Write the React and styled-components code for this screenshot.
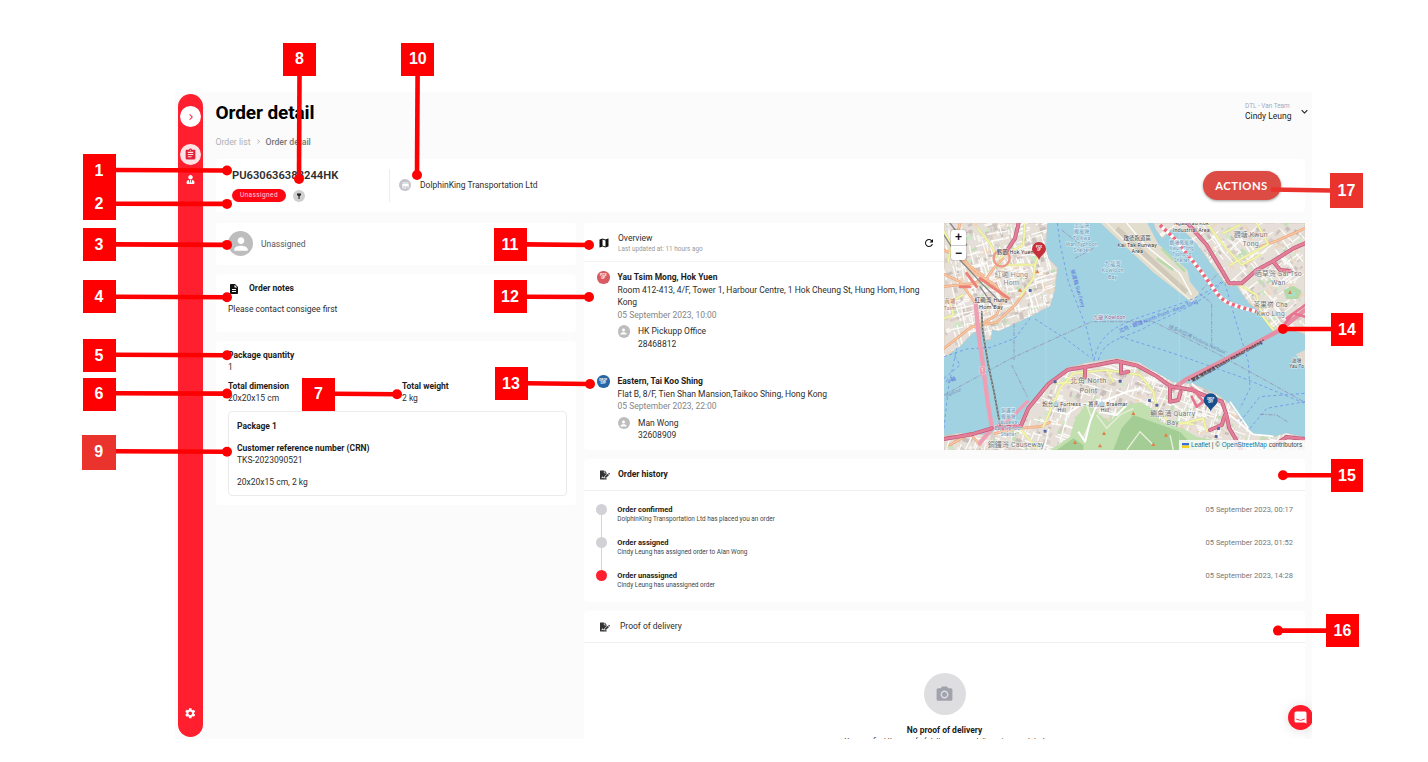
import React from "react";
import styled, { createGlobalStyle } from "styled-components";
import {
  MdChevronRight, MdAssignment, MdSettings, MdPerson, MdMap, MdRefresh,
  MdDescription, MdCameraAlt, MdStore, MdKeyboardArrowDown,
} from "react-icons/md";
import { FaFileSignature, FaUserTie } from "react-icons/fa";

const Global = createGlobalStyle`
  * { box-sizing: border-box; }
  body { margin: 0; background: #fff; font-family: Roboto, "Liberation Sans", sans-serif; }
  svg { display: block; flex: none; }
`;

const Page = styled.div`
  position: relative;
  width: 1428px;
  height: 762px;
  padding: 92px 116px 23px 175px;
  overflow: hidden;
`;
const Frame = styled.div`
  position: relative;
  display: flex;
  gap: 13px;
  height: 647px;
  padding: 1.5px 7.5px 0 3px;
  background: #fbfbfb;
  overflow: hidden;
`;
const Sidebar = styled.nav`
  width: 25px;
  height: 643.5px;
  flex: none;
  border-radius: 13px;
  background: #ff1f2f;
  color: #fff;
  display: flex;
  flex-direction: column;
  align-items: center;
  padding: 12.5px 0 17px;
`;
const NavItem = styled.div`
  width: 21px;
  height: 21px;
  border-radius: 50%;
  display: flex;
  align-items: center;
  justify-content: center;
  margin-bottom: ${(p) => p.$after || 0}px;
  background: ${(p) => p.$bg || "transparent"};
  color: ${(p) => p.$fg || "#fff"};
`;
const Spacer = styled.div`flex: 1;`;
const Main = styled.main`
  flex: 1;
  min-width: 0;
  display: flex;
  flex-direction: column;
  & > * { flex-shrink: 0; }
`;
const Text = styled.div`
  font-size: ${(p) => p.$size || 8.5}px;
  font-weight: ${(p) => p.$weight || 400};
  line-height: ${(p) => p.$lh || 12.5}px;
  letter-spacing: ${(p) => p.$ls || 0}px;
  color: ${(p) => p.$color || "#2e2e2e"};
  white-space: nowrap;
`;
const Bold = styled(Text)`
  font-weight: 700;
  color: #1c1c1c;
  text-align: ${(p) => p.$align || "left"};
`;
const TopBar = styled.header`
  display: flex;
  justify-content: space-between;
  height: 65px;
`;
const Title = styled.h1`
  margin: 7px 0 0 -0.5px;
  font-size: 19px;
  line-height: 24px;
  letter-spacing: -0.1px;
  color: #000;
`;
const Crumbs = styled.div`
  display: flex;
  align-items: center;
  gap: 3px;
  margin: 11px 0 0 -0.5px;
  color: #b5b5b5;
`;
const User = styled.div`
  display: flex;
  align-items: center;
  gap: 6px;
  height: 22px;
  margin: 7px -6px 0 0;
`;
const Card = styled.section`
  background: #fff;
  border-radius: 4px;
`;
const Summary = styled(Card)`
  display: flex;
  align-items: center;
  height: 53.5px;
  padding: 0 24px 0 16px;
`;
const OrderRef = styled.div`width: 157px;`;
const StatusRow = styled.div`
  display: flex;
  align-items: center;
  gap: 7px;
  margin-top: 6px;
`;
const Badge = styled.div`
  width: 54px;
  height: 13px;
  border-radius: 7px;
  background: #ff0712;
  color: #ffd5d8;
  font-size: 6.5px;
  letter-spacing: 0.4px;
  line-height: 13px;
  text-align: center;
`;
const Round = styled.div`
  width: ${(p) => p.$d}px;
  height: ${(p) => p.$d}px;
  flex: none;
  border-radius: 50%;
  background: ${(p) => p.$bg};
  color: ${(p) => p.$fg || "#fff"};
  display: flex;
  align-items: center;
  justify-content: center;
`;
const Divider = styled.div`
  width: 1px;
  height: 33px;
  background: #ececec;
  margin-right: 9px;
`;
const Company = styled.div`
  display: flex;
  align-items: center;
  gap: 9px;
  flex: 1;
`;
const ActionButton = styled.button`
  width: 78px;
  height: 29.5px;
  padding: 0;
  border: 0;
  border-radius: 15px;
  background: #dc4b44;
  color: #fff;
  font: 700 11.3px/29px Lato, sans-serif;
  letter-spacing: 0.45px;
  box-shadow: 0 1px 3px rgba(0, 0, 0, 0.4);
`;
const Columns = styled.div`
  display: grid;
  grid-template-columns: 360px 721px;
  gap: 8px;
  margin-top: 11px;
`;
const Column = styled.div`
  display: flex;
  flex-direction: column;
  gap: 9px;
`;
const Assignee = styled(Card)`
  display: flex;
  align-items: center;
  gap: 8px;
  height: 41.5px;
  padding: 0 12px;
`;
const Notes = styled(Card)`
  height: 58.5px;
  padding: 9px 12px;
`;
const NotesHead = styled.div`
  display: flex;
  align-items: center;
  gap: 9px;
  height: 12px;
  margin-bottom: 8.5px;
`;
const Packages = styled(Card)`
  height: 164px;
  padding: 7.8px 9px 8.5px 12px;
`;
const Totals = styled.div`
  display: grid;
  grid-template-columns: 174px 1fr;
  margin: 6px 0 6.7px;
`;
const PackageBox = styled.div`
  height: 85px;
  border: 1px solid #ebebeb;
  border-radius: 4px;
  padding: 8px;
  display: flex;
  flex-direction: column;
  gap: 9px;
`;
const Overview = styled(Card)`
  display: grid;
  grid-template-columns: 360px 361px;
  height: 227px;
`;
const OverviewHead = styled.div`
  display: flex;
  align-items: center;
  height: 39px;
  padding: 1px 9px 0 14px;
  border-bottom: 1.5px solid #f3f3f3;
`;
const HeadText = styled.div`
  flex: 1;
  margin: 2px 0 0 8px;
`;
const Stop = styled.div`
  display: flex;
  gap: 8px;
  height: 104.3px;
  padding: 9px 0 0 13px;
`;
const StopMark = styled(Round)`
  font-size: 3px;
  line-height: 3px;
  font-weight: 700;
  text-align: center;
  opacity: 0.95;
`;
const Contact = styled.div`
  display: flex;
  gap: 8px;
  margin-top: 4px;
`;
const History = styled(Card)`height: 143px;`;
const SectionHead = styled.div`
  display: flex;
  align-items: center;
  gap: ${(p) => p.$gap}px;
  height: 32px;
  padding-left: 15.5px;
  border-bottom: 1px solid #efefef;
`;
const Events = styled.div`
  padding: 12.7px 12px 0 12px;
`;
const Event = styled.div`
  position: relative;
  display: flex;
  height: 33.4px;
`;
const EventRail = styled.div`
  width: 11px;
  margin-right: 10.3px;
  display: flex;
  flex-direction: column;
  align-items: center;
  &::after {
    content: "";
    width: 1px;
    flex: 1;
    background: ${(p) => (p.$last ? "transparent" : "#d4d4d8")};
  }
`;
const EventBody = styled.div`flex: 1;`;
const Proof = styled(Card)`
  height: 200px;
`;
const Empty = styled.div`
  display: flex;
  flex-direction: column;
  align-items: center;
  padding-top: 30px;
  gap: 8.5px;
`;
const Chat = styled.div`
  position: absolute;
  left: 1113px;
  top: 613px;
  width: 25px;
  height: 25px;
  border-radius: 50%;
  background: #ff1a2b;
  box-shadow: 0 1px 12px rgba(0, 0, 0, 0.13);
  display: flex;
  align-items: center;
  justify-content: center;
`;
const MapPane = styled.div`
  position: relative;
  height: 227px;
  overflow: hidden;
`;
const Zoom = styled.div`
  position: absolute;
  left: 7px;
  top: 7px;
  width: 15px;
  background: #fff;
  border-radius: 2px;
  box-shadow: 0 0 1.5px rgba(0, 0, 0, 0.6);
`;
const ZoomKey = styled.div`
  height: 15px;
  text-align: center;
  font: 700 12px/15px "Liberation Sans", sans-serif;
  color: #111;
  & + & { border-top: 1px solid #ccc; }
`;
const Credit = styled.div`
  position: absolute;
  right: 0;
  bottom: 0;
  width: 126px;
  height: 10px;
  display: flex;
  align-items: center;
  justify-content: center;
  gap: 2px;
  background: rgba(255, 255, 255, 0.8);
  color: #444;
  font: 6.4px/10px "Liberation Sans", sans-serif;
  white-space: nowrap;
  b { font-weight: 400; color: #0078a8; }
`;
const Overlay = styled.div`
  position: absolute;
  inset: 0;
  pointer-events: none;
`;
const Tag = styled.div`
  position: absolute;
  left: ${(p) => p.$x}px;
  top: ${(p) => p.$y}px;
  width: ${(p) => p.$w || 33}px;
  height: ${(p) => p.$h || 33}px;
  display: flex;
  align-items: center;
  justify-content: center;
  background: ${(p) => p.$bg || "#fe0002"};
  color: #fff;
  font: 700 16px/1 "Liberation Sans", sans-serif;
`;

/* ---------- map ---------- */
function rng(seed) {
  let s = seed;
  return () => ((s = (s * 16807) % 2147483647) / 2147483647);
}
const LAND = {
  kowloon: "M12 24H322L316 95L325 130L352 158L344 225L331 272L272 303L176 348L156 343L152 374L136 374L133 338L100 352L62 392L12 428Z",
  east: "M640 24H1095V358L1060 345L1012 352L985 330L962 292L925 262L890 212L862 212L842 186L812 145L770 85L725 42L690 45L668 70L650 48Z",
  island: "M12 662L60 655L150 660L176 636L240 620L262 575L318 510L382 458L450 442L530 430L600 444L660 480L700 502L762 508L830 538L872 570L905 620L940 658L1006 664L1040 655L1095 668V705H12Z",
};
function texture(x0, y0, w, h, n, seed, tilt) {
  const r = rng(seed);
  const fills = ["#d7cec8", "#d9cdc6", "#f7f5f0", "#c9e8c4", "#efd5bc", "#cfc3c0", "#eadbe0", "#c4ddb6", "#c9bfba"];
  const out = [];
  for (let i = 0; i < n; i++) {
    const x = x0 + r() * w, y = y0 + r() * h, a = tilt + (r() > 0.5 ? 90 : 0) + r() * 14;
    const street = r() > 0.62;
    out.push(
      <rect key={i} x={x} y={y} width={street ? 24 + r() * 45 : 5 + r() * 16} height={street ? 3.5 : 4 + r() * 9}
        transform={`rotate(${a.toFixed(1)} ${x.toFixed(1)} ${y.toFixed(1)})`}
        fill={street ? "#fdfdfb" : fills[Math.floor(r() * fills.length)]} />
    );
  }
  return out;
}
const ORANGE = [
  "M12 105L60 130L105 175L165 208L190 245L170 300L120 330", "M12 215L70 208L100 205L140 190L165 155L190 130",
  "M12 178L60 200L110 270", "M12 400L95 335L170 322L225 270L255 232", "M60 24L45 90L85 150L130 182", "M960 95L1010 78L1095 40",
  "M165 655L235 640L300 635L330 622", "M30 690L90 655L120 690",
];
const YELLOW = [
  "M113 40L150 85L170 125", "M200 150H285L300 110", "M285 150L280 190L240 245", "M255 24L250 90L200 115L180 130",
  "M800 24L850 90L905 150L960 120", "M870 150L985 88L950 24", "M890 205L950 240L965 300L1000 345", "M850 55L900 30",
  "M310 635L360 520L400 475L500 465L600 480L640 530L650 580", "M350 505L420 500L430 470M500 465L520 500", "M730 625L790 610L800 650M650 590L690 620L760 628",
  "M240 640L290 700", "M70 240L30 260L40 300L12 310", "M12 50L35 90L25 140",
];
const TRUNK = [
  "M170 640L243 632L265 580L325 507L384 464L470 450L530 438L592 452L650 484L692 514L755 525L803 545L846 560L858 595L868 640L897 690L906 710",
  "M236 24L225 70L195 115", "M742 24L800 90L848 170L868 205L905 205L950 165L1000 138L1060 100L1095 85",
  "M436 455L434 488M543 440V475L565 470", "M690 514L690 560L715 555L722 530", "M855 600L845 630L810 645", "M1000 140L1020 165L1050 168",
  "M1005 690L1040 666L1095 672", "M12 672L95 658L155 640",
];
const FERRY = [
  "M352 24L360 85L385 200L440 340L462 438", "M285 312L375 370L455 430", "M475 435C490 370 560 370 620 335S760 285 850 200",
  "M462 435C480 340 560 320 650 290S780 250 852 195", "M12 425L80 402L150 398L225 370L270 310", "M12 640L25 520L50 400M12 490L60 450L40 415",
  "M855 205L885 310L925 440L930 520L900 580", "M540 365L700 415L900 485L1095 565", "M930 640L980 580L1095 560", "M900 620L960 545L1095 535",
];
const BORDER = [
  "M12 540L210 432L455 320H640L830 415L1095 562", "M222 325V435M215 450L262 545", "M778 235L815 265V400",
  "M365 45L432 98M405 130L460 100", "M785 225L835 175", "M960 598L1010 600L1045 622",
];
const LABELS = [
  [425, 36, 15, "#5f92b5", ["土瓜灣", "避風塘", "To Kwa", "Wan Typhoon", "Shelter"]],
  [592, 75, 16, "#333", ["啟德跑道區", "Kai Tak Runway", "Area"]],
  [518, 152, 16, "#5f92b5", ["九龍灣", "Kowloon", "Bay"]],
  [754, 31, 16, "#444", ["Ngau Tau Kok", "Industrial Area"]],
  [725, 88, 14, "#5f92b5", ["觀塘避風塘", "Kwun Tong", "Typhoon", "Shelter"]],
  [932, 66, 21, "#777", ["觀塘 Kwun", "Tong"]],
  [226, 117, 16, "#333", ["鶴園 Hok Yuen"]],
  [214, 185, 21, "#888", ["紅磡 Hung", "Hom"]],
  [153, 260, 17, "#333", ["紅磡灣 Hung", "Hom Bay"]],
  [1015, 184, 21, "#777", ["晒草灣 Sai Tso", "Wan"]],
  [992, 277, 20, "#777", ["茶果嶺 Cha", "Kwo Ling"]],
  [508, 313, 15, "#94548e", ["九龍 Kowloon"]],
  [445, 505, 22, "#777", ["北角 North", "Point"]],
  [365, 572, 16, "#444", ["炮台山 Fortress", "Hill"]],
  [495, 572, 16, "#444", ["— 寶馬山 Braemar", "Hill"]],
  [698, 603, 21, "#777", ["鰂魚涌 Quarry", "Bay"]],
  [205, 592, 14, "#5f92b5", ["銅鑼灣", "避風塘", "Causeway", "Bay Typhoon", "Shelter"]],
  [228, 697, 21, "#777", ["銅鑼灣 Causeway"]],
  [1070, 440, 14, "#444", ["油塘", "Yau To"]],
  [30, 265, 16, "#b96d55", ["黃埔", "Tsim"]],
];
const cjk = 'Roboto, "Noto Sans", "Noto Sans CJK TC", sans-serif';

function Pin({ x, y, color, lines }) {
  return (
    <g transform={`translate(${x} ${y})`} textAnchor="middle" fill="#fff" fontSize="8" fontWeight="700" fontFamily="Roboto, sans-serif">
      <path d="M0 31C-6 15-21 12-21-2a21 21 0 1 1 42 0C21 12 6 15 0 31Z" fill={color} />
      <text y="-4">{lines[0]}</text><text y="5">{lines[1]}</text>
    </g>
  );
}
function HarbourMap() {
  return (
    <svg width="361" height="227" viewBox="12 24 1083 681" preserveAspectRatio="none">
      <defs>
        {Object.entries(LAND).map(([k, d]) => <clipPath id={k} key={k}><path d={d} /></clipPath>)}
        <clipPath id="hills"><path d="M330 705L390 665L402 622L440 560L478 598L510 622L545 572L600 562L650 588L660 622L728 640L770 665L850 680L880 705Z" /></clipPath>
      </defs>
      <rect x="12" y="24" width="1083" height="681" fill="#a0d2e1" />
      {Object.values(LAND).map((d) => <path key={d} d={d} fill="#e5dfd8" stroke="#cfc6bd" strokeWidth="2" />)}
      <g clipPath="url(#kowloon)">{texture(12, 24, 345, 400, 760, 71, -22)}</g>
      <g clipPath="url(#east)">{texture(640, 24, 455, 340, 620, 113, 46)}
        <path d="M1030 225L1060 212L1085 228L1075 252L1040 252Z" fill="#b5d8a8" /><path d="M1045 232h22v12h-22z" fill="#a9e0cb" />
      </g>
      <g clipPath="url(#island)">{texture(12, 430, 1083, 275, 1150, 997, 12)}</g>
      <g clipPath="url(#hills)">
        <rect x="320" y="540" width="570" height="165" fill="#c2dfaf" />
        <path d="M520 705L545 640L580 600L640 622L720 650L770 705ZM350 705L400 670L430 690V705Z" fill="#a3cd95" />
        <path d="M440 570L455 610L430 670M470 600L500 640L540 600L580 580M560 705L600 650L640 690M700 705L690 660" fill="none" stroke="#e9efdc" strokeWidth="4" />
      </g>
      <path d="M378 600L420 570L500 555L560 530L605 520M470 570L450 620L435 680L415 650M480 590L530 600L560 570" fill="none" stroke="#fff" strokeWidth="6" strokeLinejoin="round" />
      <path d="M482 24H622L655 88L742 165L750 200L778 235L755 262L640 172L560 98Z" fill="#e3ddce" />
      <path d="M530 40L650 150L740 232" fill="none" stroke="#d0c9b9" strokeWidth="15" />
      <path d="M560 24L615 90L720 175L755 240" fill="none" stroke="#fff" strokeWidth="4" />
      <path d="M500 24L575 98L748 252" fill="none" stroke="#f6f3e4" strokeWidth="4" />
      <path d="M665 100L705 140L735 170M650 130L700 165" fill="none" stroke="#b4dba8" strokeWidth="7" />
      <path d="M1095 405L1068 418L1086 448L1095 456Z" fill="#e0d9d0" />
      <path d="M755 505L940 658L1000 664M870 560L925 640" fill="none" stroke="#fff" strokeWidth="5" />
      <g fill="none" strokeLinejoin="round" strokeLinecap="round">
        {ORANGE.map((d) => <path key={d} d={d} stroke="#e9a883" strokeWidth="8" />)}
        {ORANGE.map((d) => <path key={d} d={d} stroke="#fbc9a2" strokeWidth="4" />)}
        {YELLOW.map((d) => <path key={d} d={d} stroke="#d5d694" strokeWidth="7" />)}
        {YELLOW.map((d) => <path key={d} d={d} stroke="#f4f7a8" strokeWidth="5" />)}
        <path d="M12 60L60 135L120 200L180 260M30 24L80 90M120 215L165 280" stroke="#888" strokeWidth="4" />
        <circle cx="185" cy="130" r="24" stroke="#ed9a85" strokeWidth="7" />
        <path d="M80 175L110 215M90 215H60M120 190L205 250" stroke="#ec8275" strokeWidth="9" />
        <g strokeLinecap="butt">
          {BORDER.map((d) => <path key={d} d={d} stroke="#9688ae" strokeWidth="2.2" strokeDasharray="13 4 4 4" />)}
          {FERRY.map((d) => <path key={d} d={d} stroke="#7196ed" strokeWidth="2.6" strokeDasharray="9 8" />)}
        </g>
        <path d="M107 265L115 350L130 460L143 560L156 640L120 684" stroke="#ef9fb4" strokeWidth="13" />
        <path d="M160 640L210 612L262 560" stroke="#ef9fb4" strokeWidth="10" />
        <path d="M125 290L128 350L145 450L162 530L180 630" stroke="#686c6c" strokeWidth="5" />
        <path d="M125 290L128 350L145 450L162 530L180 630" stroke="#c3cac7" strokeWidth="2.5" strokeDasharray="5 6" strokeLinecap="butt" />
        <path d="M700 522L735 495L860 432L1020 345L1095 285" stroke="#e58fa5" strokeWidth="13" />
        <path d="M745 497L860 436L972 374" stroke="#77535f" strokeWidth="4" strokeDasharray="5 4" strokeLinecap="butt" />
        {TRUNK.map((d) => <path key={d} d={d} stroke="#bd5775" strokeWidth="12" />)}
        {TRUNK.map((d) => <path key={d} d={d} stroke="#e47f9a" strokeWidth="8" />)}
        <path d="M755 518L790 560L770 575L755 545M800 545L805 570M1040 310L1095 270M1035 325L1060 295L1095 305" stroke="#e77592" strokeWidth="8" />
        <path d="M660 30L705 72L780 165L835 240C860 270 900 275 950 290" stroke="#fff" strokeWidth="11" strokeLinecap="butt" />
        <path d="M660 30L705 72L780 165L835 240C860 270 900 275 950 290" stroke="#ed6679" strokeWidth="11" strokeDasharray="9 9" strokeLinecap="butt" />
      </g>
      <g fill="#df8248">{[[405, 682], [492, 655], [480, 692], [640, 688], [580, 595], [678, 660], [1050, 232], [292, 170], [240, 225]].map(([x, y]) => (
        <path key={x} d={`M${x - 6} ${y + 5}h12l-6-11z`} />))}</g>
      <g fill="#5666a5">{[[270, 226], [315, 648], [628, 556], [650, 570], [835, 640], [828, 664], [540, 498], [345, 500]].map(([x, y]) => (
        <rect key={x} x={x - 4} y={y - 4} width="9" height="9" rx="2" />))}</g>
      <rect x="118" y="455" width="19" height="23" rx="4" fill="#ec9bb0" stroke="#fff" />
      <text x="127" y="472" fontSize="14" fill="#fff" textAnchor="middle" fontFamily="Roboto">1</text>
      <g textAnchor="middle" fontFamily={cjk}>
        {LABELS.map(([x, y, size, fill, lines]) => lines.map((t, i) => (
          <text key={x + t} x={x} y={y + i * size * 1.25} fontSize={size} fill={fill} stroke="#fff" strokeOpacity=".65" strokeWidth="3" paintOrder="stroke" letterSpacing=".5">{t}</text>
        )))}
        <g fontSize="16" fill="#5f79e0">
          <text transform="translate(408 222) rotate(74)">新渡輪 Sun Ferry</text>
          <text transform="translate(656 308) rotate(-21)">北角 - 觀塘 North Point - Kwun Tong</text>
          <text transform="translate(34 500) rotate(-18)">小輪</text>
        </g>
        <text transform="translate(770 378) rotate(25)" fontSize="15" fill="#7b8fb8">維多利亞港 Victoria Harbour</text>
        <text transform="translate(862 443) rotate(-29)" fontSize="13.5" fontWeight="700" fill="#54343f">東區海底隧道 Eastern Harbour Crossing</text>
        <text transform="translate(42 537) rotate(-25)" fontSize="14" fill="#7b8fb8">Harbour</text>
      </g>
      <path d="M318 24V705M718 24V705" stroke="#fff" strokeOpacity=".25" strokeWidth="2" />
      <Pin x={297} y={104} color="#c62f3c" lines={["PICK", "UP"]} />
      <Pin x={812} y={558} color="#174f8e" lines={["DROP", "OFF"]} />
    </svg>
  );
}

/* ---------- numbered call-outs ---------- */
const RED = "#fe0002";
const ALT = "#ea332d";
const TAGS = [
  { n: 1, x: 82.5, y: 154 }, { n: 2, x: 82.5, y: 187.2 }, { n: 3, x: 82.5, y: 228 }, { n: 4, x: 82.5, y: 280 },
  { n: 5, x: 82.5, y: 339 }, { n: 6, x: 82.5, y: 377.5 }, { n: 7, x: 302, y: 377.5 }, { n: 8, x: 283, y: 42.5 },
  { n: 9, x: 82, y: 434.5, w: 33.5, h: 35, bg: ALT }, { n: 10, x: 401.3, y: 42.5 }, { n: 11, x: 493.5, y: 228 },
  { n: 12, x: 493.5, y: 280 }, { n: 13, x: 494.5, y: 367 }, { n: 14, x: 1331, y: 313, w: 32 },
  { n: 15, x: 1331, y: 459.3, w: 32 }, { n: 16, x: 1326, y: 614 }, { n: 17, x: 1330, y: 173, w: 33, h: 35, bg: ALT },
];
const LEADS = [
  [115, 170, 227, 170.5], [115, 203.7, 227, 203.9], [115, 244.4, 227, 244.9], [115, 296.7, 227, 297.2],
  [115, 354.7, 227, 355.2], [115, 393.2, 227, 393.6], [335, 393.8, 397, 394.2], [299.5, 75, 299, 179],
  [115, 451.2, 227, 451.7], [417.6, 75, 417, 175], [526, 244.4, 589, 245], [526, 296.7, 589, 297],
  [527, 383.3, 590, 384], [1331, 329, 1283, 329], [1331, 475.3, 1283, 475.3], [1326, 630.6, 1278, 630.6],
];

function StopInfo({ bg, mark, title, address, date, name, phone }) {
  return (
    <Stop>
      <StopMark $d={12.5} $bg={bg}>{mark[0]}<br />{mark[1]}</StopMark>
      <div>
        <Bold>{title}</Bold>
        {address.map((a) => <Text key={a}>{a}</Text>)}
        <Text $color="#858585">{date}</Text>
        <Contact>
          <Round $d={12.5} $bg="#bdbdbd"><MdPerson size={9} /></Round>
          <div><Text>{name}</Text><Text>{phone}</Text></div>
        </Contact>
      </div>
    </Stop>
  );
}

const EVENTS = [
  ["Order confirmed", "DolphinKing Transportation Ltd has placed you an order", "05 September 2023, 00:17"],
  ["Order assigned", "Cindy Leung has assigned order to Alan Wong", "05 September 2023, 01:52"],
  ["Order unassigned", "Cindy Leung has unassigned order", "05 September 2023, 14:28"],
];

export default function App() {
  return (
    <Page>
      <Global />
      <Frame>
        <Sidebar>
          <NavItem $bg="#fff" $fg="#e8324a" $after={16.5}><MdChevronRight size={12} /></NavItem>
          <NavItem $bg="#fde3e6" $fg="#e2223a" $after={4}><MdAssignment size={13} /></NavItem>
          <NavItem><FaUserTie size={9} /></NavItem>
          <Spacer />
          <NavItem $after={-4}><MdSettings size={12.5} /></NavItem>
        </Sidebar>
        <Main>
          <TopBar>
            <div>
              <Title>Order detail</Title>
              <Crumbs>
                <Text $color="#b0b0b0" $size={8.7}>Order list</Text>
                <MdChevronRight size={9} />
                <Text $color="#777" $weight={500} $size={8.7}>Order detail</Text>
              </Crumbs>
            </div>
            <User>
              <div>
                <Text $size={6.4} $lh={10} $color="#9eabc0">DTL - Van Team</Text>
                <Text $lh={11} $color="#222">Cindy Leung</Text>
              </div>
              <MdKeyboardArrowDown size={13} color="#222" />
            </User>
          </TopBar>
          <Summary>
            <OrderRef>
              <Text $size={11.2} $weight={600} $lh={15}>PU630636383244HK</Text>
              <StatusRow>
                <Badge>Unassigned</Badge>
                <Round $d={12} $bg="#cfcfcf">
                  <svg width="8" height="8" viewBox="0 0 8 8"><path d="M2 1.5h4v1.6L4.6 4.3V7H3.5V4.3L2 3.1z" fill="#222" /></svg>
                </Round>
              </StatusRow>
            </OrderRef>
            <Divider />
            <Company>
              <Round $d={12} $bg="#c3c3cb"><MdStore size={9} /></Round>
              <Text>DolphinKing Transportation Ltd</Text>
            </Company>
            <ActionButton>ACTIONS</ActionButton>
          </Summary>
          <Columns>
            <Column>
              <Assignee>
                <Round $d={25} $bg="#bdbdbd"><MdPerson size={20} /></Round>
                <Text $color="#555">Unassigned</Text>
              </Assignee>
              <Notes>
                <NotesHead>
                  <MdDescription size={12} color="#111" />
                  <Bold>Order notes</Bold>
                </NotesHead>
                <Text>Please contact consigee first</Text>
              </Notes>
              <Packages>
                <Bold>Package quantity</Bold>
                <Text>1</Text>
                <Totals>
                  <div><Bold>Total dimension</Bold><Text>20x20x15 cm</Text></div>
                  <div><Bold>Total weight</Bold><Text>2 kg</Text></div>
                </Totals>
                <PackageBox>
                  <Bold>Package 1</Bold>
                  <div><Bold>Customer reference number (CRN)</Bold><Text>TKS-2023090521</Text></div>
                  <Text>20x20x15 cm, 2 kg</Text>
                </PackageBox>
              </Packages>
            </Column>
            <Column>
              <Overview>
                <div>
                  <OverviewHead>
                    <MdMap size={12} color="#111" />
                    <HeadText>
                      <Text $lh={11}>Overview</Text>
                      <Text $size={6.4} $lh={10} $color="#999">Last updated at: 11 hours ago</Text>
                    </HeadText>
                    <MdRefresh size={12} color="#111" />
                  </OverviewHead>
                  <StopInfo bg="#d9525c" mark={["PICK", "UP"]} title="Yau Tsim Mong, Hok Yuen"
                    address={["Room 412-413, 4/F, Tower 1, Harbour Centre, 1 Hok Cheung St, Hung Hom, Hong", "Kong"]}
                    date="05 September 2023, 10:00" name="HK Pickupp Office" phone="28468812" />
                  <StopInfo bg="#1d5da0" mark={["DROP", "OFF"]} title="Eastern, Tai Koo Shing"
                    address={["Flat B, 8/F, Tien Shan Mansion,Taikoo Shing, Hong Kong"]}
                    date="05 September 2023, 22:00" name="Man Wong" phone="32608909" />
                </div>
                <MapPane>
                  <HarbourMap />
                  <Zoom><ZoomKey>+</ZoomKey><ZoomKey>−</ZoomKey></Zoom>
                  <Credit>
                    <svg width="7" height="5" viewBox="0 0 7 5"><path d="M0 0h7v2.5H0z" fill="#3b6fd8" /><path d="M0 2.5h7V5H0z" fill="#f5d423" /></svg>
                    <span><b>Leaflet</b> | © <b>OpenStreetMap</b> contributors</span>
                  </Credit>
                </MapPane>
              </Overview>
              <History>
                <SectionHead $gap={8.5}>
                  <FaFileSignature size={10} color="#333" />
                  <Bold>Order history</Bold>
                </SectionHead>
                <Events>
                  {EVENTS.map(([title, note, time], i) => (
                    <Event key={title}>
                      <EventRail $last={i === 2}><Round $d={11} $bg={i === 2 ? "#ff1f2f" : "#d1d1d6"} /></EventRail>
                      <EventBody>
                        <Bold $size={7.5} $lh={11}>{title}</Bold>
                        <Text $size={6.4} $lh={8} $color="#444">{note}</Text>
                      </EventBody>
                      <Text $size={7.5} $lh={11} $color="#777">{time}</Text>
                    </Event>
                  ))}
                </Events>
              </History>
              <Proof>
                <SectionHead $gap={10.5}>
                  <FaFileSignature size={10} color="#333" />
                  <Text>Proof of delivery</Text>
                </SectionHead>
                <Empty>
                  <Round $d={42} $bg="#dedee1" $fg="#a2a2ae"><MdCameraAlt size={19} /></Round>
                  <div>
                    <Bold $align="center">No proof of delivery</Bold>
                    <Text $size={7.5} $lh={9}>You can find the proof of delivery once delivery is completed</Text>
                  </div>
                </Empty>
              </Proof>
            </Column>
          </Columns>
        </Main>
        <Chat>
          <svg width="13" height="13" viewBox="0 0 13 13">
            <path d="M2 .5h9A1.5 1.5 0 0 1 12.5 2v10.500L10 11.500H2A1.500 1.500 0 0 1 .5 10V2A1.500 1.500 0 0 1 2 .5z" fill="#fff" />
            <path d="M2.600 8.300q3.900 2.400 7.800 0" fill="none" stroke="#ff1a2b" strokeWidth=".9" strokeLinecap="round" />
          </svg>
        </Chat>
      </Frame>
      <Overlay>
        <svg width="1428" height="762" viewBox="0 0 1428 762">
          {LEADS.map(([x1, y1, x2, y2]) => (
            <g key={`${x1}-${y1}`}>
              <path d={`M${x1} ${y1}L${x2} ${y2}`} stroke={RED} strokeWidth="4.6" />
              <circle cx={x2} cy={y2} r="5" fill={RED} />
            </g>
          ))}
          <path d="M1271 189.500L1331 190.500" stroke={ALT} strokeWidth="4.600" />
        </svg>
        {TAGS.map((t) => <Tag key={t.n} $x={t.x} $y={t.y} $w={t.w} $h={t.h} $bg={t.bg}>{t.n}</Tag>)}
      </Overlay>
    </Page>
  );
}
